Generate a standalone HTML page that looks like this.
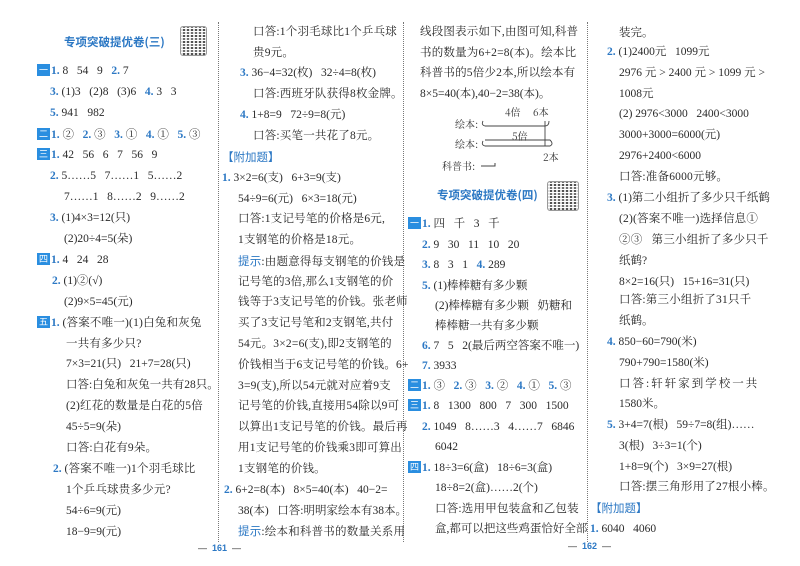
<!DOCTYPE html>
<html><head><meta charset="utf-8"><style>
body{margin:0;width:800px;height:566px;background:#fff;position:relative;overflow:hidden;font-family:"Liberation Serif","Noto Serif CJK SC",serif;color:#2a2a2a;font-size:11.5px}
.l{position:absolute;white-space:nowrap;line-height:14px;transform:translateY(-7px)}
.n{color:#2c78c4;font-weight:bold}
.b{display:inline-block;width:13px;height:12px;background:#2a8ee0;color:#fff;font-size:9px;line-height:12px;text-align:center;font-family:"Noto Sans CJK SC",sans-serif;vertical-align:1px;margin-right:1px}
.t{position:absolute;color:#2c78c4;font-family:"Noto Sans CJK SC",sans-serif;font-size:11.5px;font-weight:bold;white-space:nowrap;line-height:14px}
.ti{color:#2c78c4;font-family:"Noto Sans CJK SC",sans-serif}
.qr{position:absolute;border:1px solid #888;border-radius:3px;background:
repeating-linear-gradient(90deg,rgba(255,255,255,.8) 0 2px,transparent 2px 4px),
repeating-linear-gradient(0deg,#333 0 2px,#fff 2px 3px,#555 3px 5px,#fff 5px 6px);opacity:.85}
.vd{position:absolute;width:0;border-left:1.5px dotted #777}
.s{letter-spacing:0.2px}
</style></head><body>
<div class="vd" style="left:218px;top:22px;height:520px"></div>
<div class="vd" style="left:403px;top:22px;height:520px"></div>
<div class="vd" style="left:587px;top:22px;height:520px"></div>

<!-- col1 -->
<div class="t" style="left:64px;top:35px">专项突破提优卷(三)</div>
<div class="qr" style="left:180px;top:26px;width:25px;height:28px"></div>
<div class="l" style="left:37px;top:71px"><span class="b">一</span><span class="n">1.</span> 8 &nbsp; 54 &nbsp; 9 &nbsp; <span class="n">2.</span> 7</div>
<div class="l" style="left:50px;top:92px"><span class="n">3.</span> (1)3 &nbsp; (2)8 &nbsp; (3)6 &nbsp; <span class="n">4.</span> 3 &nbsp; 3</div>
<div class="l" style="left:50px;top:113px"><span class="n">5.</span> 941 &nbsp; 982</div>
<div class="l" style="left:37px;top:135px"><span class="b">二</span><span class="n">1.</span> ② &nbsp; <span class="n">2.</span> ③ &nbsp; <span class="n">3.</span> ① &nbsp; <span class="n">4.</span> ① &nbsp; <span class="n">5.</span> ③</div>
<div class="l" style="left:37px;top:155px"><span class="b">三</span><span class="n">1.</span> 42 &nbsp; 56 &nbsp; 6 &nbsp; 7 &nbsp; 56 &nbsp; 9</div>
<div class="l" style="left:50px;top:176px"><span class="n">2.</span> 5……5 &nbsp; 7……1 &nbsp; 5……2</div>
<div class="l" style="left:64px;top:197px">7……1 &nbsp; 8……2 &nbsp; 9……2</div>
<div class="l" style="left:50px;top:218px"><span class="n">3.</span> (1)4×3=12(只)</div>
<div class="l" style="left:64px;top:239px">(2)20÷4=5(朵)</div>
<div class="l" style="left:37px;top:260px"><span class="b">四</span><span class="n">1.</span> 4 &nbsp; 24 &nbsp; 28</div>
<div class="l" style="left:52px;top:281px"><span class="n">2.</span> (1)②(√)</div>
<div class="l" style="left:64px;top:302px">(2)9×5=45(元)</div>
<div class="l" style="left:37px;top:323px"><span class="b">五</span><span class="n">1.</span> <span class="s">(答案不唯一)(1)白兔和灰兔</span></div>
<div class="l s" style="left:66px;top:344px">一共有多少只?</div>
<div class="l" style="left:66px;top:364px">7×3=21(只) &nbsp; 21+7=28(只)</div>
<div class="l" style="left:66px;top:385px">口答:白兔和灰兔一共有28只。</div>
<div class="l s" style="left:66px;top:406px">(2)红花的数量是白花的5倍</div>
<div class="l" style="left:66px;top:427px">45÷5=9(朵)</div>
<div class="l s" style="left:66px;top:448px">口答:白花有9朵。</div>
<div class="l" style="left:53px;top:469px"><span class="n">2.</span> <span class="s">(答案不唯一)1个羽毛球比</span></div>
<div class="l s" style="left:66px;top:490px">1个乒乓球贵多少元?</div>
<div class="l" style="left:66px;top:511px">54÷6=9(元)</div>
<div class="l" style="left:66px;top:532px">18−9=9(元)</div>
<div class="l" style="left:198px;top:548px;font-size:9px;font-family:'Liberation Sans',sans-serif">— &nbsp;<span class="n">161</span>&nbsp; —</div>

<!-- col2 -->
<div class="l s" style="left:253px;top:32px">口答:1个羽毛球比1个乒乓球</div>
<div class="l s" style="left:253px;top:53px">贵9元。</div>
<div class="l" style="left:240px;top:73px"><span class="n">3.</span> 36−4=32(枚) &nbsp; 32÷4=8(枚)</div>
<div class="l s" style="left:253px;top:94px">口答:西班牙队获得8枚金牌。</div>
<div class="l" style="left:240px;top:115px"><span class="n">4.</span> 1+8=9 &nbsp; 72÷9=8(元)</div>
<div class="l s" style="left:253px;top:136px">口答:买笔一共花了8元。</div>
<div class="l ti" style="left:222px;top:157px">【附加题】</div>
<div class="l" style="left:222px;top:178px"><span class="n">1.</span> 3×2=6(支) &nbsp; 6+3=9(支)</div>
<div class="l" style="left:238px;top:199px">54÷9=6(元) &nbsp; 6×3=18(元)</div>
<div class="l s" style="left:238px;top:219px">口答:1支记号笔的价格是6元,</div>
<div class="l s" style="left:238px;top:240px">1支钢笔的价格是18元。</div>
<div class="l s" style="left:238px;top:261px"><span class="ti">提示</span>:由题意得每支钢笔的价钱是</div>
<div class="l s" style="left:238px;top:282px">记号笔的3倍,那么1支钢笔的价</div>
<div class="l s" style="left:238px;top:302px">钱等于3支记号笔的价钱。张老师</div>
<div class="l s" style="left:238px;top:323px">买了3支记号笔和2支钢笔,共付</div>
<div class="l s" style="left:238px;top:344px">54元。3×2=6(支),即2支钢笔的</div>
<div class="l s" style="left:238px;top:365px">价钱相当于6支记号笔的价钱。6+</div>
<div class="l s" style="left:238px;top:386px">3=9(支),所以54元就对应着9支</div>
<div class="l s" style="left:238px;top:406px">记号笔的价钱,直接用54除以9可</div>
<div class="l s" style="left:238px;top:427px">以算出1支记号笔的价钱。最后再</div>
<div class="l s" style="left:238px;top:448px">用1支记号笔的价钱乘3即可算出</div>
<div class="l s" style="left:238px;top:469px">1支钢笔的价钱。</div>
<div class="l" style="left:224px;top:490px"><span class="n">2.</span> 6+2=8(本) &nbsp; 8×5=40(本) &nbsp; 40−2=</div>
<div class="l" style="left:238px;top:511px">38(本) &nbsp; 口答:明明家绘本有38本。</div>
<div class="l s" style="left:238px;top:531px"><span class="ti">提示</span>:绘本和科普书的数量关系用</div>

<!-- col3 -->
<div class="l s" style="left:420px;top:32px">线段图表示如下,由图可知,科普</div>
<div class="l s" style="left:420px;top:53px">书的数量为6+2=8(本)。绘本比</div>
<div class="l s" style="left:420px;top:73px">科普书的5倍少2本,所以绘本有</div>
<div class="l" style="left:420px;top:94px">8×5=40(本),40−2=38(本)。</div>
<svg style="position:absolute;left:430px;top:100px" width="140" height="75" font-size="10" font-family="Noto Serif CJK SC,serif" fill="#333">
<text x="25" y="28">绘本:</text><text x="75" y="16">4倍</text><text x="103" y="16">6本</text>
<path d="M53 21 q-2 4 2 5 h60 q4 0 4 -5 M55 26 h60" stroke="#444" fill="none" stroke-width="0.9"/>
<text x="25" y="48">绘本:</text><text x="82" y="40">5倍</text><text x="113" y="61">2本</text>
<path d="M53 41 q-2 4 2 5 h65 q4 -2 0 -6 h-65 M115 21 v25" stroke="#444" fill="none" stroke-width="0.9"/>
<text x="12" y="70">科普书:</text><path d="M51 66 h14 v-3" stroke="#444" fill="none"/>
</svg>
<div class="t" style="left:437px;top:188px">专项突破提优卷(四)</div>
<div class="qr" style="left:547px;top:181px;width:30px;height:28px"></div>
<div class="l" style="left:408px;top:224px"><span class="b">一</span><span class="n">1.</span> 四 &nbsp; 千 &nbsp; 3 &nbsp; 千</div>
<div class="l" style="left:422px;top:245px"><span class="n">2.</span> 9 &nbsp; 30 &nbsp; 11 &nbsp; 10 &nbsp; 20</div>
<div class="l" style="left:422px;top:265px"><span class="n">3.</span> 8 &nbsp; 3 &nbsp; 1 &nbsp; <span class="n">4.</span> 289</div>
<div class="l" style="left:422px;top:286px"><span class="n">5.</span> (1)棒棒糖有多少颗</div>
<div class="l" style="left:435px;top:306px">(2)棒棒糖有多少颗 &nbsp; 奶糖和</div>
<div class="l" style="left:435px;top:326px">棒棒糖一共有多少颗</div>
<div class="l" style="left:422px;top:346px"><span class="n">6.</span> 7 &nbsp; 5 &nbsp; 2(最后两空答案不唯一)</div>
<div class="l" style="left:422px;top:366px"><span class="n">7.</span> 3933</div>
<div class="l" style="left:408px;top:386px"><span class="b">二</span><span class="n">1.</span> ③ &nbsp; <span class="n">2.</span> ③ &nbsp; <span class="n">3.</span> ② &nbsp; <span class="n">4.</span> ① &nbsp; <span class="n">5.</span> ③</div>
<div class="l" style="left:408px;top:406px"><span class="b">三</span><span class="n">1.</span> 8 &nbsp; 1300 &nbsp; 800 &nbsp; 7 &nbsp; 300 &nbsp; 1500</div>
<div class="l" style="left:422px;top:427px"><span class="n">2.</span> 1049 &nbsp; 8……3 &nbsp; 4……7 &nbsp; 6846</div>
<div class="l" style="left:435px;top:447px">6042</div>
<div class="l" style="left:408px;top:468px"><span class="b">四</span><span class="n">1.</span> 18÷3=6(盒) &nbsp; 18÷6=3(盒)</div>
<div class="l" style="left:435px;top:488px">18÷8=2(盒)……2(个)</div>
<div class="l s" style="left:435px;top:509px">口答:选用甲包装盒和乙包装</div>
<div class="l" style="left:435px;top:529px">盒,都可以把这些鸡蛋恰好全部</div>
<div class="l" style="left:568px;top:546px;font-size:9px;font-family:'Liberation Sans',sans-serif">— &nbsp;<span class="n">162</span>&nbsp; —</div>

<!-- col4 -->
<div class="l" style="left:619px;top:33px">装完。</div>
<div class="l" style="left:607px;top:52px"><span class="n">2.</span> (1)2400元 &nbsp; 1099元</div>
<div class="l" style="left:619px;top:73px">2976 元 &gt; 2400 元 &gt; 1099 元 &gt;</div>
<div class="l" style="left:619px;top:94px">1008元</div>
<div class="l" style="left:619px;top:114px">(2) 2976&lt;3000 &nbsp; 2400&lt;3000</div>
<div class="l" style="left:619px;top:135px">3000+3000=6000(元)</div>
<div class="l" style="left:619px;top:156px">2976+2400&lt;6000</div>
<div class="l s" style="left:619px;top:177px">口答:准备6000元够。</div>
<div class="l" style="left:607px;top:198px"><span class="n">3.</span> (1)第二小组折了多少只千纸鹤</div>
<div class="l s" style="left:619px;top:219px">(2)(答案不唯一)选择信息①</div>
<div class="l s" style="left:619px;top:240px">②③ &nbsp; 第三小组折了多少只千</div>
<div class="l" style="left:619px;top:261px">纸鹤?</div>
<div class="l" style="left:619px;top:282px">8×2=16(只) &nbsp; 15+16=31(只)</div>
<div class="l s" style="left:619px;top:300px">口答:第三小组折了31只千</div>
<div class="l" style="left:619px;top:321px">纸鹤。</div>
<div class="l" style="left:607px;top:342px"><span class="n">4.</span> 850−60=790(米)</div>
<div class="l" style="left:619px;top:363px">790+790=1580(米)</div>
<div class="l" style="left:619px;top:384px;letter-spacing:2px">口答:轩轩家到学校一共</div>
<div class="l" style="left:619px;top:404px">1580米。</div>
<div class="l" style="left:607px;top:425px"><span class="n">5.</span> 3+4=7(根) &nbsp; 59÷7=8(组)……</div>
<div class="l" style="left:619px;top:446px">3(根) &nbsp; 3÷3=1(个)</div>
<div class="l" style="left:619px;top:467px">1+8=9(个) &nbsp; 3×9=27(根)</div>
<div class="l s" style="left:619px;top:487px">口答:摆三角形用了27根小棒。</div>
<div class="l ti" style="left:590px;top:508px">【附加题】</div>
<div class="l" style="left:590px;top:529px"><span class="n">1.</span> 6040 &nbsp; 4060</div>
</body></html>
